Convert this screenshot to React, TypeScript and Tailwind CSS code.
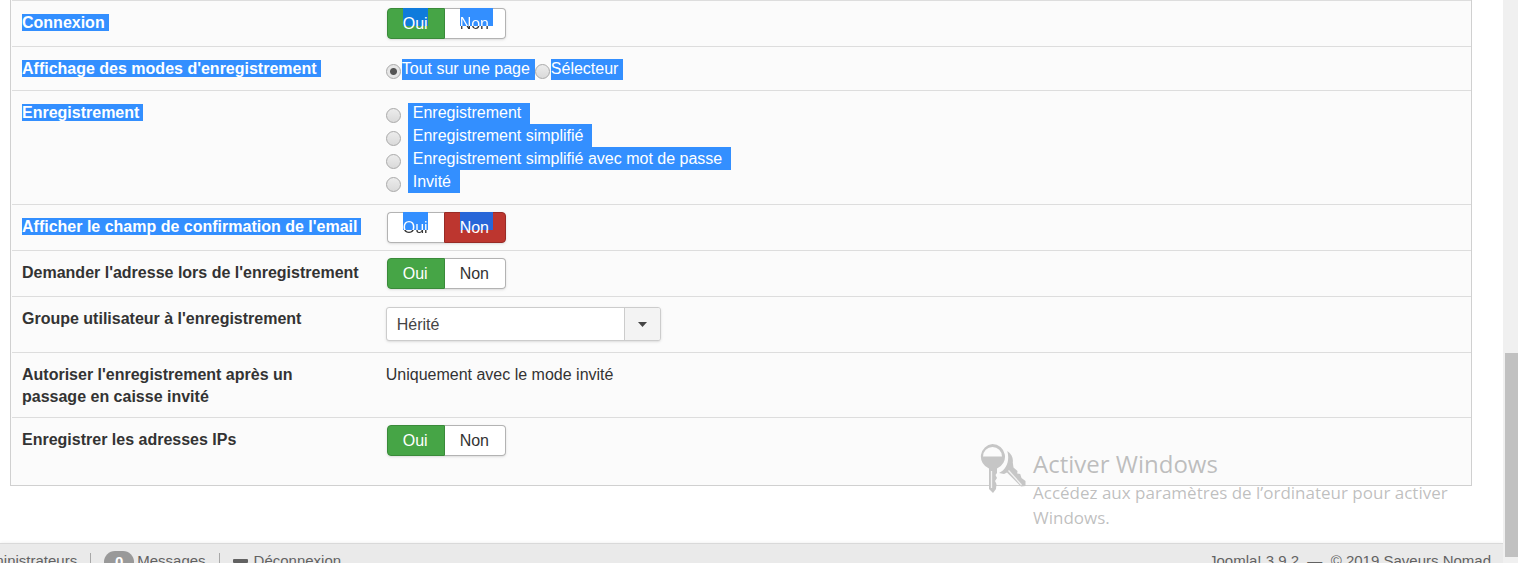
import { useState } from 'react'
import type { ReactNode } from 'react'
import clsx from 'clsx'

type YesNo = 'oui' | 'non'

const registrationModes = [
  { value: 'registration', label: 'Enregistrement' },
  { value: 'simple', label: 'Enregistrement simplifié' },
  { value: 'simple-password', label: 'Enregistrement simplifié avec mot de passe' },
  { value: 'guest', label: 'Invité' },
]

const radioClass =
  'w-[15px] h-[15px] mb-px shrink-0 appearance-none rounded-full border border-[#a9a9a9] bg-gradient-to-b from-[#ececec] to-[#dadada] checked:bg-[radial-gradient(circle,#555_0_3px,#e6e6e6_4px)]'

function Row({ label, selected, htmlFor, children, className }: {
  label: ReactNode
  selected?: boolean
  htmlFor?: string
  children: ReactNode
  className?: string
}) {
  const text = <span className={clsx(selected && 'bg-[#338fff] text-white pr-1')}>{label}</span>

  return (
    <div className="flex border-t border-[#dddddd]">
      <div className="w-1/4 shrink-0 pl-2.5 pt-[11px] pb-[9px] font-bold">
        {htmlFor ? <label htmlFor={htmlFor}>{text}</label> : text}
      </div>
      <div className={clsx('flex-1 pl-[9px]', className)}>{children}</div>
    </div>
  )
}

function ToggleOption({ name, value, text, checked, selected, onChange }: {
  name: string
  value: YesNo
  text: string
  checked: boolean
  selected?: boolean
  onChange: (value: YesNo) => void
}) {
  const yes = value === 'oui'

  return (
    <label
      className={clsx(
        'relative border pl-[15px] pr-4 h-[31px] leading-[29px] cursor-pointer',
        yes ? 'rounded-l' : 'rounded-r',
        checked && yes && 'bg-[#46a546] border-[#3a8a3a] text-white',
        checked && !yes && 'bg-[#bd362f] border-[#982b26] text-white',
        !checked && 'bg-white border-[#b3b3b3] text-[#333]',
        !checked && yes && 'border-r-0',
        !checked && !yes && 'border-l-0'
      )}
    >
      <input
        type="radio"
        name={name}
        value={value}
        checked={checked}
        onChange={() => onChange(value)}
        className="sr-only"
      />
      {selected && (
        <span
          className={clsx(
            'absolute -top-px left-[15px] h-[18px]',
            yes ? 'right-4' : 'right-3',
            !checked && 'bg-[#338fff]',
            checked && yes && 'bg-[#0f7bdc]',
            checked && !yes && 'bg-[#2766d8]'
          )}
        />
      )}
      <span
        className={clsx(
          'relative block',
          selected && !checked && 'bg-clip-text text-transparent bg-[linear-gradient(#fff_17px,#333_17px)]'
        )}
      >
        {text}
      </span>
    </label>
  )
}

function Toggle({ name, initial, selected }: { name: string; initial: YesNo; selected?: boolean }) {
  const [value, setValue] = useState<YesNo>(initial)

  return (
    <div className="inline-flex ml-px rounded shadow-sm align-top">
      <ToggleOption name={name} value="oui" text="Oui" checked={value === 'oui'} selected={selected} onChange={setValue} />
      <ToggleOption name={name} value="non" text="Non" checked={value === 'non'} selected={selected} onChange={setValue} />
    </div>
  )
}

function KeysIcon() {
  return (
    <svg className="w-[46px] h-[49px] shrink-0" viewBox="0 0 46 49" fill="#c6c6c6">
      {/* back key */}
      <path d="M27.300 7c4 2.500 6.200 7 5.500 11.500l.7 5 4 3.500-.3 2.500 3 .5 1.300 4 4 3v5l-4.500.5L27 28.500l-3 1.500-5-1c7.500-3.500 11-12 8.300-22z" />
      <path d="M28.500 26.500l13 14.500" stroke="#f2f2f2" strokeWidth="1.300" fill="none" />
      {/* front key */}
      <path
        fillRule="evenodd"
        d="M12.500 0a12.700 12.700 0 0 1 4.500 24.500V29l-1.500 2 1.500 3-2 3 1.500 3-.5 5-3 4-4-4V24.500A12.700 12.700 0 0 1 12.500 0zM3 12.500h19a9.500 9.500 0 0 0-19 0z"
      />
      <path d="M11.500 27v17" stroke="#f2f2f2" strokeWidth="1.300" />
    </svg>
  )
}

export default function App() {
  const [display, setDisplay] = useState('page')
  const [mode, setMode] = useState('')

  return (
    <div className="relative flex h-screen overflow-hidden bg-white text-[#333] text-[16px] leading-[22px] font-['Liberation_Sans',Arial,sans-serif]">
      <div className="flex-1 min-w-0 flex flex-col">
        <main className="flex-1 pl-2.5 pr-[31px]">
          <div className="border border-t-0 border-[#d0d0d0] bg-[#fbfbfb] pl-px">
            <Row label="Connexion" selected className="py-[7px]">
              <Toggle name="login" initial="oui" selected />
            </Row>

            <Row label="Affichage des modes d'enregistrement" selected className="py-2.5">
              <div className="flex items-end h-[23px]">
                <input id="display-page" type="radio" name="display" className={radioClass} checked={display === 'page'} onChange={() => setDisplay('page')} />
                <label htmlFor="display-page" className="ml-px pr-[5px] h-[21px] leading-[19px] bg-[#338fff] text-white">Tout sur une page</label>
                <input id="display-selector" type="radio" name="display" className={radioClass} checked={display === 'selector'} onChange={() => setDisplay('selector')} />
                <label htmlFor="display-selector" className="ml-px pr-[5px] h-[21px] leading-[19px] bg-[#338fff] text-white">Sélecteur</label>
              </div>
            </Row>

            <Row label="Enregistrement" selected className="pt-2.5 pb-[11px]">
              {registrationModes.map((item, i) => (
                <div key={item.value} className="flex items-end h-[23px]">
                  <input
                    id={item.value}
                    type="radio"
                    name="mode"
                    className={radioClass}
                    checked={mode === item.value}
                    onChange={() => setMode(item.value)}
                  />
                  <label
                    htmlFor={item.value}
                    className={clsx('ml-[7px] pl-[5px] pr-[9px] bg-[#338fff] text-white', i === 0 ? 'h-[21px] leading-[19px]' : 'h-[23px] leading-[23px]')}
                  >
                    {item.label}
                  </label>
                </div>
              ))}
            </Row>

            <Row label="Afficher le champ de confirmation de l'email" selected className="py-[7px]">
              <Toggle name="email-confirm" initial="non" selected />
            </Row>

            <Row label="Demander l'adresse lors de l'enregistrement" className="py-[7px]">
              <Toggle name="address" initial="oui" />
            </Row>

            <Row label="Groupe utilisateur à l'enregistrement" htmlFor="user-group" className="pt-2.5 pb-[11px]">
              <div className="relative w-[275px] h-[34px]">
                <select
                  id="user-group"
                  className="w-full h-full appearance-none rounded-[3px] border border-[#ccc] bg-white px-2.5 pt-0.5 text-[#444] shadow-sm"
                >
                  <option>Hérité</option>
                </select>
                <span className="absolute right-px inset-y-px w-9 flex items-center justify-center border-l border-[#ccc] bg-[#f3f3f3] rounded-r-[2px] pointer-events-none">
                  <svg className="w-[9px] h-[5px]" viewBox="0 0 9 5" fill="#444">
                    <path d="M0 0h9L4.500 5z" />
                  </svg>
                </span>
              </div>
            </Row>

            <Row label={<>Autoriser l'enregistrement après un<br />passage en caisse invité</>} className="pt-[11px] pb-[9px]">
              Uniquement avec le mode invité
            </Row>

            <Row label="Enregistrer les adresses IPs" className="pt-[7px] pb-[29px]">
              <Toggle name="ip" initial="oui" />
            </Row>
          </div>
        </main>

        {/* Status bar */}
        <footer className="h-5 shrink-0 border-t border-[#d9d9d9] bg-[#eaeaea] text-[15px] text-[#626262] shadow-[0_0_4px_rgba(0,0,0,0.08)]">
          <div className="flex justify-between pt-1.5 pr-3 leading-[22px] whitespace-nowrap">
            <div className="flex">
              <a href="#" className="-ml-[27px]">Administrateurs</a>
              <span className="w-px h-5 mt-[3px] mx-[13px] bg-[#a8a8a8]" />
              <a href="#" className="flex">
                <span className="w-[30px] h-[22px] mt-px mr-[3px] rounded-full bg-[#999] text-white text-center font-bold">0</span>
                Messages
              </a>
              <span className="w-px h-5 mt-[3px] mx-[13px] bg-[#a8a8a8]" />
              <a href="#" className="flex">
                <span className="w-[15px] h-1 mt-[9px] mr-1.5 rounded-[1px] bg-[#626262]" />
                Déconnexion
              </a>
            </div>
            <p className="whitespace-pre">Joomla! 3.9.2  —  © 2019 Saveurs Nomad</p>
          </div>
        </footer>
      </div>

      {/* Scrollbar */}
      <div className="w-[15px] shrink-0 flex flex-col justify-end pl-0.5 pb-1.5 bg-[#f0f0f0]">
        <div className="h-[204px] bg-[#c1c1c1]" />
      </div>

      {/* System watermark */}
      <div className="absolute right-[60px] bottom-[33px] flex gap-[7px] pointer-events-none text-[#808080]/50 font-['Open_Sans',sans-serif]">
        <KeysIcon />
        <div className="w-[425px] pt-1">
          <p className="text-[24px] leading-8">Activer Windows</p>
          <p className="text-[17px] leading-[25px]">Accédez aux paramètres de l’ordinateur pour activer<br />Windows.</p>
        </div>
      </div>
    </div>
  )
}
